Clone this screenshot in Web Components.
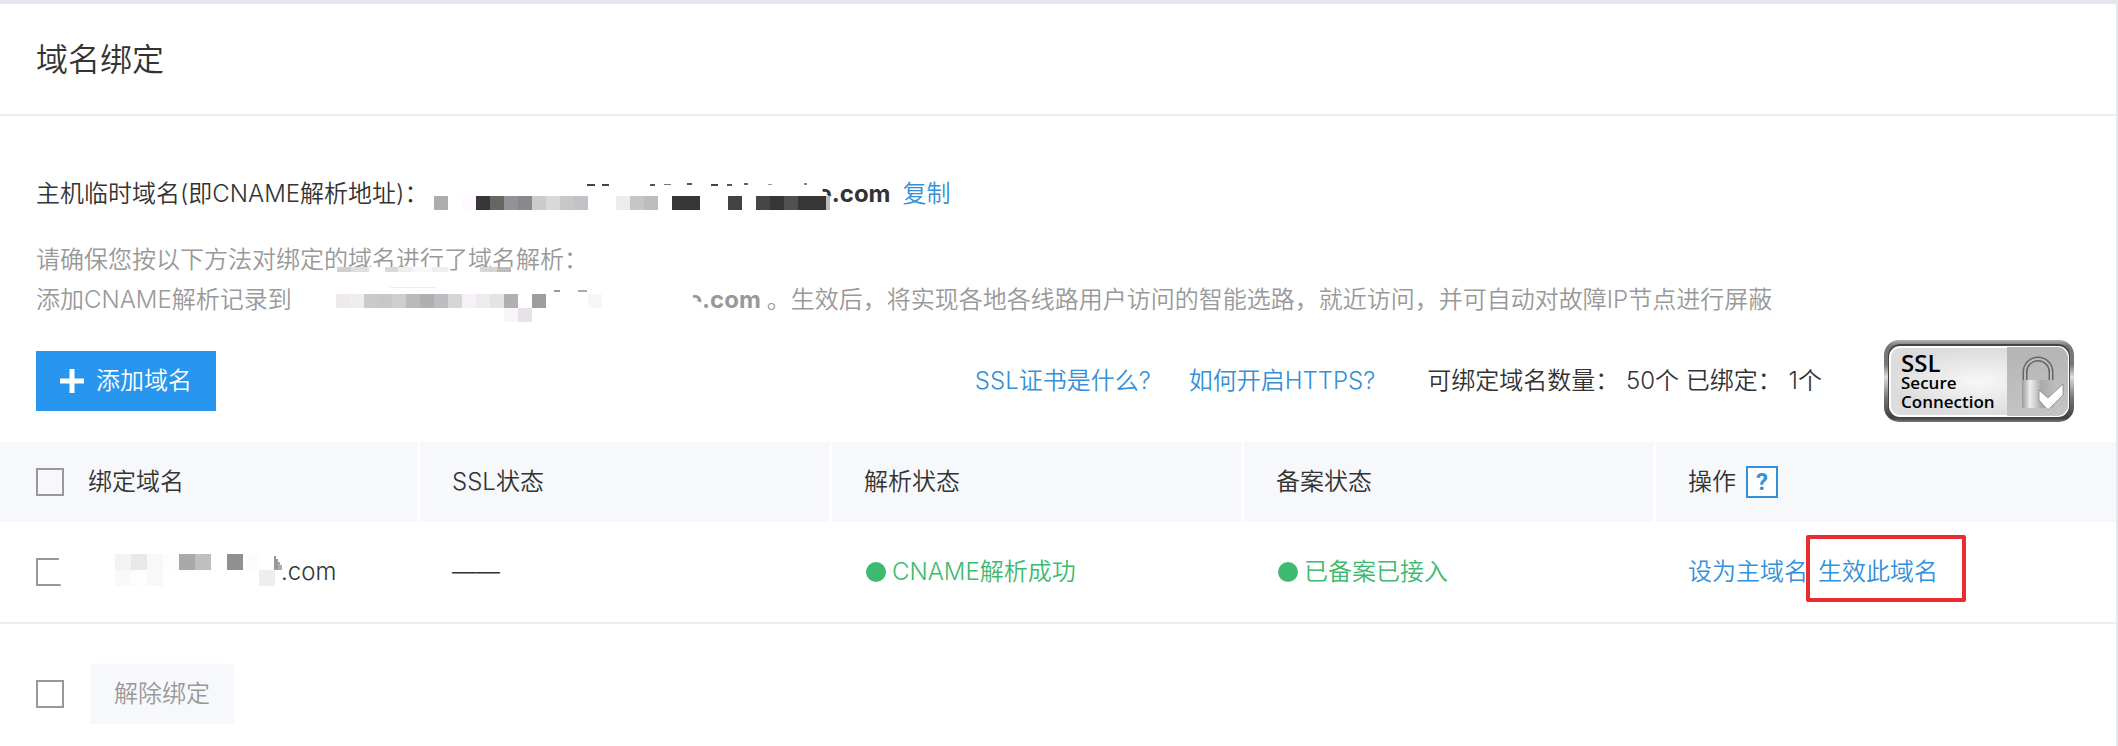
<!DOCTYPE html>
<html lang="zh-CN">
<head>
    <meta charset="UTF-8">
    <meta name="viewport" content="width=device-width, initial-scale=1.0">
    <title>域名绑定</title>
    <style>
        :root {
            --text-color: #333;
            --muted-color: #999;
            --link-color: #3490d9;
            --primary-color: #2896ee;
            --success-color: #3dba6f;
            --line-color: #ebedf2;
            --surface-color: #f7f8fc;
        }

        body {
            margin: 0;
            background-color: #fff;
            color: var(--text-color);
            font: 350 24px/40px Inter, "Noto Sans CJK SC", sans-serif;
        }
    </style>
</head>
<body>
    <e-domain-page></e-domain-page>

    <script>
        class EPixelMask extends HTMLElement {
            constructor() {
                super();
                this.shadow = this.attachShadow({mode: 'open'});
            }

            connectedCallback() {
                this.render();
            }

            // rows: shades split by spaces, rows split by "/", "-" leaves a cell empty
            cells() {
                const size = Number(this.getAttribute('size'));
                const top = Number(this.getAttribute('top') || 0);
                return this.getAttribute('rows').split('/').map((row, y) =>
                    row.trim().split(/\s+/).map((shade, x) => shade === '-' ? '' :
                        `<rect x="${x * size}" y="${top + y * size}" width="${size}" height="${size}" fill="#${shade}"/>`
                    ).join('')
                ).join('');
            }

            // marks: "x y width height shade" groups split by ";"
            marks() {
                return (this.getAttribute('marks') || '').split(';').filter(Boolean).map(mark => {
                    const [x, y, width, height, shade] = mark.trim().split(' ');
                    return `<rect x="${x}" y="${y}" width="${width}" height="${height}" fill="#${shade}"/>`;
                }).join('');
            }

            render() {
                this.shadow.innerHTML = `
                    <style>
                        :host {
                            display: block;
                            flex: none;
                        }

                        svg {
                            display: block;
                            position: relative;
                            overflow: visible;
                        }
                    </style>

                    <svg width="${this.getAttribute('width')}" height="40" shape-rendering="crispEdges" aria-hidden="true">
                        ${this.marks()}
                        ${this.cells()}
                    </svg>
                `;
            }
        }

        class ECheckbox extends HTMLElement {
            constructor() {
                super();
                this.shadow = this.attachShadow({mode: 'open'});
            }

            connectedCallback() {
                this.render();
            }

            render() {
                this.shadow.innerHTML = `
                    <style>
                        :host {
                            display: block;
                            flex: none;
                            width: 28px;
                            height: 28px;
                        }

                        input {
                            display: block;
                            appearance: none;
                            box-sizing: border-box;
                            width: 28px;
                            height: 28px;
                            margin: 0;
                            border: 2px solid var(--muted-color);
                            background-color: transparent;
                        }

                        input:checked {
                            background-color: var(--primary-color);
                        }

                        :host([cut]) input {
                            clip-path: polygon(0 0, 23px 0, 21px 14px, 25px 100%, 0 100%);
                        }
                    </style>

                    <input type="checkbox" aria-label="${this.getAttribute('label')}">
                `;
            }
        }

        class EButton extends HTMLElement {
            constructor() {
                super();
                this.shadow = this.attachShadow({mode: 'open'});
            }

            connectedCallback() {
                this.render();
            }

            render() {
                this.shadow.innerHTML = `
                    <style>
                        :host {
                            display: block;
                            flex: none;
                        }

                        button {
                            display: flex;
                            align-items: center;
                            gap: 12px;
                            height: 60px;
                            padding: 0 24px;
                            border: 0;
                            background-color: var(--surface-color);
                            color: var(--muted-color);
                            font: inherit;
                        }

                        :host([primary]) button {
                            background-color: var(--primary-color);
                            color: #fff;
                        }
                    </style>

                    <button type="button"><slot name="icon"></slot><slot></slot></button>
                `;
            }
        }

        class ELink extends HTMLElement {
            constructor() {
                super();
                this.shadow = this.attachShadow({mode: 'open'});
            }

            connectedCallback() {
                this.render();
            }

            render() {
                this.shadow.innerHTML = `
                    <style>
                        :host {
                            display: inline-block;
                            position: relative;
                        }

                        a {
                            color: var(--link-color);
                            text-decoration: none;
                        }

                        :host([highlight])::after {
                            content: "";
                            position: absolute;
                            inset: -17px -28px -10px -12px;
                            border: 4px solid #e92b32;
                            border-radius: 2px;
                            pointer-events: none;
                        }
                    </style>

                    <a href="#"><slot></slot></a>
                `;
            }
        }

        class EStatus extends HTMLElement {
            constructor() {
                super();
                this.shadow = this.attachShadow({mode: 'open'});
            }

            connectedCallback() {
                this.render();
            }

            render() {
                this.shadow.innerHTML = `
                    <style>
                        :host {
                            display: flex;
                            align-items: center;
                            gap: 6px;
                            padding-left: 2px;
                            color: var(--success-color);
                        }

                        i {
                            width: 20px;
                            height: 20px;
                            border-radius: 50%;
                            background-color: currentColor;
                        }
                    </style>

                    <i></i><span><slot></slot></span>
                `;
            }
        }

        class ESslBadge extends HTMLElement {
            constructor() {
                super();
                this.shadow = this.attachShadow({mode: 'open'});
            }

            connectedCallback() {
                this.render();
            }

            render() {
                this.shadow.innerHTML = `
                    <style>
                        :host {
                            display: block;
                            flex: none;
                        }

                        svg {
                            display: block;
                        }

                        text {
                            font-family: "Open Sans", sans-serif;
                            font-weight: 600;
                            fill: #000;
                        }
                    </style>

                    <svg width="190" height="82" viewBox="0 0 190 82">
                        <defs>
                            <linearGradient id="rim" x1="0" y1="0" x2="0" y2="1">
                                <stop offset="0" stop-color="#b4b4b4"/>
                                <stop offset=".07" stop-color="#777"/>
                                <stop offset=".3" stop-color="#777"/>
                                <stop offset=".45" stop-color="#ddd"/>
                                <stop offset=".7" stop-color="#777"/>
                                <stop offset=".95" stop-color="#404040"/>
                                <stop offset="1" stop-color="#777"/>
                            </linearGradient>
                            <radialGradient id="plate" cx=".5" cy=".5" r=".5">
                                <stop offset="0" stop-color="#f8f8f8"/>
                                <stop offset="1" stop-color="#dcdcdc"/>
                            </radialGradient>
                            <linearGradient id="side" x1="0" y1="0" x2="0" y2="1">
                                <stop offset="0" stop-color="#b5b5b5"/>
                                <stop offset="1" stop-color="#c4c4c4"/>
                            </linearGradient>
                            <linearGradient id="lock" x1="0" y1="0" x2="1" y2="0">
                                <stop offset="0" stop-color="#999"/>
                                <stop offset=".25" stop-color="#eee"/>
                                <stop offset=".6" stop-color="#aaa"/>
                                <stop offset="1" stop-color="#bbb"/>
                            </linearGradient>
                        </defs>
                        <rect width="190" height="82" rx="15" fill="url(#rim)"/>
                        <rect x="4" y="4" width="182" height="74" rx="12" fill="#444"/>
                        <rect x="5" y="6" width="180" height="71" rx="11" fill="#fff"/>
                        <rect x="7" y="8" width="176" height="67" rx="9" fill="url(#plate)"/>
                        <path d="M123 7h50a11 11 0 0 1 11 11v47a11 11 0 0 1-11 11h-50z" fill="url(#side)"/>
                        <path d="M141 42V32a13 13 0 0 1 26 0v10" fill="none" stroke="#666" stroke-width="5"/>
                        <path d="M141 42V32a13 13 0 0 1 26 0v10" fill="none" stroke="#bbb" stroke-width="2"/>
                        <rect x="138" y="40" width="32" height="28" rx="1" fill="url(#lock)"/>
                        <path d="M155 50l9 8 15-14v11l-15 15-9-10z" fill="#fff" stroke="#777" stroke-width=".7"/>
                        <text x="17" y="32" font-size="24">SSL</text>
                        <text x="17" y="49" font-size="17">Secure</text>
                        <text x="17" y="68" font-size="17">Connection</text>
                    </svg>
                `;
            }
        }

        class EDomainNotes extends HTMLElement {
            constructor() {
                super();
                this.shadow = this.attachShadow({mode: 'open'});
            }

            connectedCallback() {
                this.render();
            }

            render() {
                this.shadow.innerHTML = `
                    <style>
                        :host {
                            display: block;
                            padding: 58px 36px 0;
                        }

                        .line {
                            display: flex;
                            white-space: nowrap;
                        }

                        .line_host {
                            margin-bottom: 26px;
                            gap: 6px;
                        }

                        .line_muted {
                            color: var(--muted-color);
                        }

                        .domain {
                            margin: 0 6px 0 -23px;
                            font-weight: 700;
                            clip-path: polygon(5px 0, 100% 0, 100% 100%, 14px 100%, 14px 24px, 5px 17px);
                        }

                        .record {
                            margin-left: 44px;
                        }
                    </style>

                    <div class="line line_host">
                        <span>主机临时域名(即CNAME解析地址)：</span>
                        <e-pixel-mask width="400" size="14" top="22"
                            rows="adadad - fefaff 373737 656764 949197 8b888c cbcbcb dad8db c7c7c7 c3c1c5 - - efeaee c6c6c6 bdbdbd - 363636 363636 - - 424242 - 464646 363636 505050 363636 363636"
                            marks="153 10 8 2 444;168 10 7 2 444;216 10 5 2 555;230 10 7 1 777;253 9 5 2 555;277 10 7 2 444;293 10 5 2 555;310 9 4 2 666;334 10 4 1 999;370 9 3 2 888;392 22 4 14 bcbcbc"></e-pixel-mask>
                        <b class="domain">e.com</b>
                        <e-link>复制</e-link>
                    </div>
                    <div class="line line_muted">请确保您按以下方法对绑定的域名进行了域名解析：</div>
                    <div class="line line_muted">
                        <span>添加CNAME解析记录到</span>
                        <e-pixel-mask class="record" width="375" size="14" top="14"
                            rows="eee9ed eeeeee ccc9cd c9c7cb cecece babab9 b0b0b0 bfbdc1 d5d6d5 f5f1f6 ececec e7e2e7 b0b0b0 - 9e9c9f - - - f7f7f7/- - - - - - - - - - - - f7f7f7 e7e2e7"
                            marks="0 -13 112 5 fff;144 -13 36 5 fff;1 -13 14 5 cfcfcf;15 -13 18 5 dedede;49 -13 13 5 d8d8d8;62 -13 14 5 eee;76 -13 20 5 f8f8f8;96 -13 16 5 eee;144 -13 17 5 d6d6d6;161 -13 14 5 bdbdbd;54 7 46 1 eee;218 10 6 2 999;242 10 9 2 aaa"></e-pixel-mask>
                        <b class="domain">e.com</b>
                        <span>。生效后，将实现各地各线路用户访问的智能选路，就近访问，并可自动对故障IP节点进行屏蔽</span>
                    </div>
                `;
            }
        }

        class EDomainToolbar extends HTMLElement {
            constructor() {
                super();
                this.shadow = this.attachShadow({mode: 'open'});
            }

            connectedCallback() {
                this.render();
            }

            render() {
                this.shadow.innerHTML = `
                    <style>
                        :host {
                            display: flex;
                            align-items: center;
                            justify-content: space-between;
                            padding: 20px 42px 20px 36px;
                        }

                        .info {
                            display: flex;
                            align-items: center;
                            white-space: nowrap;
                        }

                        .info > e-link {
                            margin-right: 38px;
                        }

                        .info > span {
                            margin: 0 62px 0 14px;
                        }
                    </style>

                    <e-button primary>
                        <svg slot="icon" width="24" height="24" aria-hidden="true"><path d="M0 12h24M12 0v24" stroke="#fff" stroke-width="5"/></svg>
                        添加域名
                    </e-button>
                    <div class="info">
                        <e-link>SSL证书是什么?</e-link>
                        <e-link>如何开启HTTPS?</e-link>
                        <span>可绑定域名数量： 50个 已绑定： 1个</span>
                        <e-ssl-badge></e-ssl-badge>
                    </div>
                `;
            }
        }

        class EDomainTable extends HTMLElement {
            constructor() {
                super();
                this.shadow = this.attachShadow({mode: 'open'});
            }

            connectedCallback() {
                this.render();
            }

            render() {
                this.shadow.innerHTML = `
                    <style>
                        :host {
                            display: block;
                        }

                        table {
                            width: 100%;
                            border-collapse: separate;
                            border-spacing: 0;
                            table-layout: fixed;
                        }

                        .col-name {
                            width: 19.85%;
                        }

                        .col-state {
                            width: 19.47%;
                        }

                        th, td {
                            box-sizing: border-box;
                            padding: 0 0 0 32px;
                            text-align: left;
                            white-space: nowrap;
                        }

                        th {
                            height: 80px;
                            border-right: 2px solid #fff;
                            background-color: var(--surface-color);
                            font-weight: inherit;
                        }

                        th:last-child {
                            border-right: 0;
                        }

                        td {
                            height: 102px;
                            border-bottom: 2px solid var(--line-color);
                        }

                        th:first-child, td:first-child {
                            padding-left: 36px;
                        }

                        .cell {
                            display: flex;
                            align-items: center;
                        }

                        .cell > e-checkbox {
                            margin-right: 24px;
                        }

                        .cell > e-pixel-mask {
                            margin-left: 27px;
                        }

                        .cell_actions {
                            gap: 10px;
                        }

                        .help {
                            box-sizing: border-box;
                            width: 32px;
                            height: 32px;
                            padding: 0;
                            border: 2px solid var(--link-color);
                            background-color: #fff;
                            color: var(--link-color);
                            font: 700 24px/28px Roboto, sans-serif;
                        }
                    </style>

                    <table>
                        <colgroup>
                            <col class="col-name">
                            <col class="col-state">
                            <col class="col-state">
                            <col class="col-state">
                            <col>
                        </colgroup>
                        <thead>
                            <tr>
                                <th><div class="cell"><e-checkbox label="全选"></e-checkbox>绑定域名</div></th>
                                <th>SSL状态</th>
                                <th>解析状态</th>
                                <th>备案状态</th>
                                <th><div class="cell cell_actions">操作<button class="help" type="button">?</button></div></th>
                            </tr>
                        </thead>
                        <tbody>
                            <tr>
                                <td>
                                    <div class="cell">
                                        <e-checkbox cut label="选择域名"></e-checkbox>
                                        <e-pixel-mask width="166" size="16" top="2"
                                            rows="f3f3f3 e8e8e8 f8f8f8 fdfdfd a9a9a9 bfbfbf - 909090 fcfcfc/f9f9f9 fdfdfd f8f8f8 - - - - - - eeeeee"
                                            marks="159 4 2 14 999;161 7 2 11 999;163 10 2 8 aaa;165 13 2 5 aaa"></e-pixel-mask>
                                        <span>.com</span>
                                    </div>
                                </td>
                                <td>——</td>
                                <td><e-status>CNAME解析成功</e-status></td>
                                <td><e-status>已备案已接入</e-status></td>
                                <td>
                                    <div class="cell cell_actions">
                                        <e-link>设为主域名</e-link>
                                        <e-link highlight>生效此域名</e-link>
                                    </div>
                                </td>
                            </tr>
                        </tbody>
                    </table>
                `;
            }
        }

        class EDomainPage extends HTMLElement {
            constructor() {
                super();
                this.shadow = this.attachShadow({mode: 'open'});
            }

            connectedCallback() {
                this.render();
            }

            render() {
                this.shadow.innerHTML = `
                    <style>
                        :host {
                            display: block;
                            box-sizing: border-box;
                            min-height: 100vh;
                            border-top: 4px solid #e4e7f0;
                            border-right: 2px solid #e4e7f0;
                        }

                        h1 {
                            margin: 0;
                            padding: 36px 36px 34px;
                            border-bottom: 2px solid var(--line-color);
                            font-size: 32px;
                            font-weight: inherit;
                            line-height: 40px;
                        }

                        footer {
                            display: flex;
                            align-items: center;
                            gap: 26px;
                            padding: 40px 36px 20px;
                        }
                    </style>

                    <h1>域名绑定</h1>
                    <e-domain-notes></e-domain-notes>
                    <e-domain-toolbar></e-domain-toolbar>
                    <e-domain-table></e-domain-table>
                    <footer>
                        <e-checkbox label="全选"></e-checkbox>
                        <e-button>解除绑定</e-button>
                    </footer>
                `;
            }
        }

        customElements.define('e-pixel-mask', EPixelMask);
        customElements.define('e-checkbox', ECheckbox);
        customElements.define('e-button', EButton);
        customElements.define('e-link', ELink);
        customElements.define('e-status', EStatus);
        customElements.define('e-ssl-badge', ESslBadge);
        customElements.define('e-domain-notes', EDomainNotes);
        customElements.define('e-domain-toolbar', EDomainToolbar);
        customElements.define('e-domain-table', EDomainTable);
        customElements.define('e-domain-page', EDomainPage);
    </script>
</body>
</html>
